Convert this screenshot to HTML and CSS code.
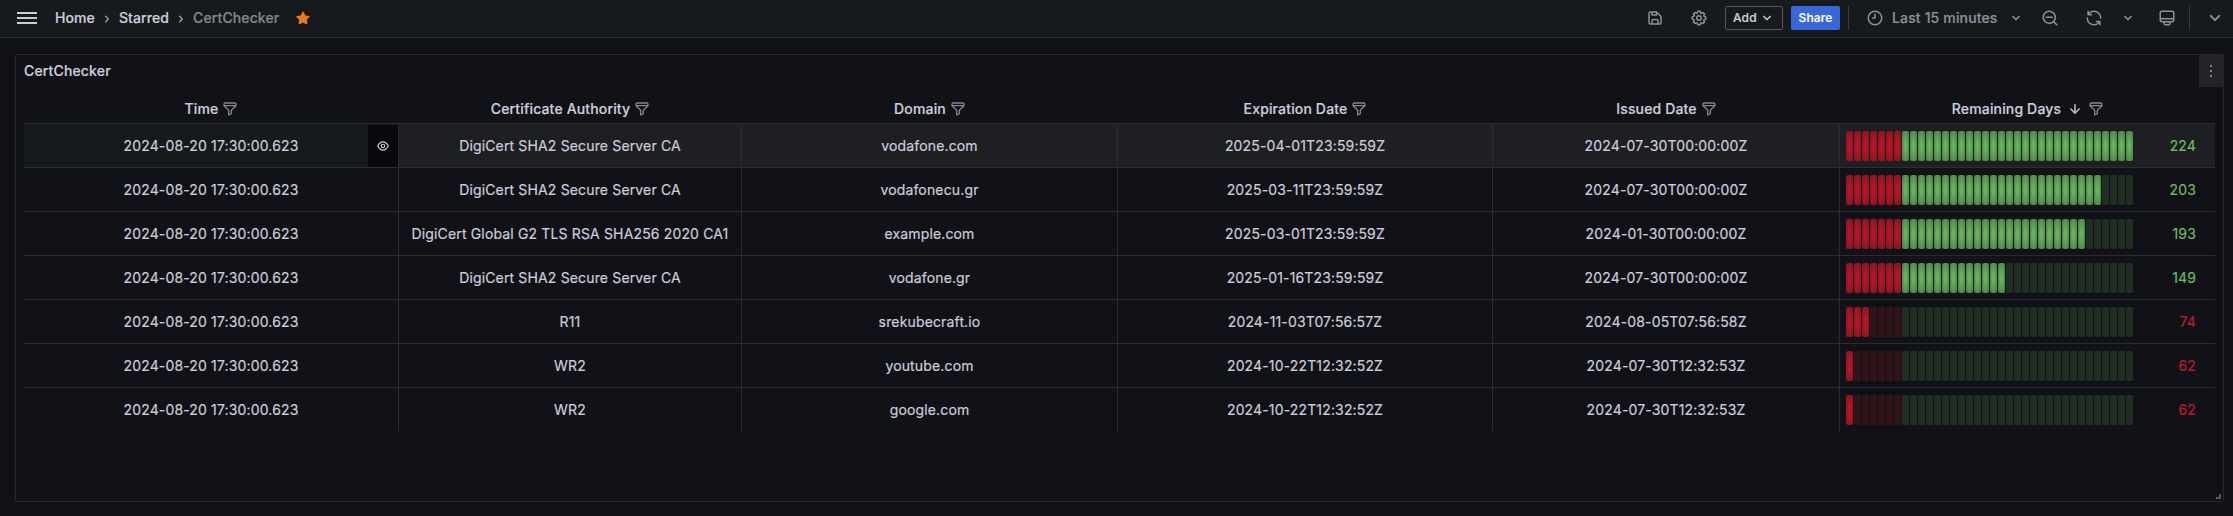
FILE: index.html
```html
<!DOCTYPE html>
<html lang="en">
<head>
<meta charset="utf-8">
<title>CertChecker</title>
<link rel="stylesheet" href="styles.css">
</head>
<body>
<svg class="defs" aria-hidden="true">
  <symbol id="filter" viewBox="0 0 24 24"><path d="M19,2H5A3,3,0,0,0,2,5V6.17a3,3,0,0,0,.25,1.2l0,.06a2.81,2.81,0,0,0,.59.86L9,14.41V21a1,1,0,0,0,.47.85A1,1,0,0,0,10,22a1,1,0,0,0,.45-.11l4-2A1,1,0,0,0,15,19V14.41l6.12-6.12a2.81,2.81,0,0,0,.59-.86l0-.06A3,3,0,0,0,22,6.17V5A3,3,0,0,0,19,2ZM13.29,13.29A1,1,0,0,0,13,14v4.38l-2,1V14a1,1,0,0,0-.29-.71L5.41,8H18.59ZM20,6H4V5A1,1,0,0,1,5,4H19a1,1,0,0,1,1,1Z"/></symbol>
  <symbol id="down" viewBox="0 0 24 24"><path d="M17,9.17a1,1,0,0,0-1.41,0L12,12.71,8.46,9.17a1,1,0,0,0-1.41,0,1,1,0,0,0,0,1.42l4.24,4.24a1,1,0,0,0,1.42,0L17,10.59A1,1,0,0,0,17,9.17Z"/></symbol>
  <symbol id="right" viewBox="0 0 24 24"><path d="M14.83,11.29,10.59,7.05a1,1,0,0,0-1.42,0,1,1,0,0,0,0,1.41L12.71,12,9.17,15.54a1,1,0,0,0,0,1.41,1,1,0,0,0,.71.29,1,1,0,0,0,.71-.29l4.24-4.24A1,1,0,0,0,14.83,11.29Z"/></symbol>
</svg>

<header class="topbar">
  <div class="topbar-left">
    <svg class="menu" viewBox="0 0 20 12"><path d="M0 1h20M0 6h20M0 11h20"/></svg>
    <nav class="crumbs">
      <span>Home</span>
      <svg class="icon sep"><use href="#right"/></svg>
      <span>Starred</span>
      <svg class="icon sep"><use href="#right"/></svg>
      <span class="current">CertChecker</span>
    </nav>
    <svg class="icon star" viewBox="0 0 24 24"><path d="M22 10.1c.1-.5-.3-1.1-.8-1.1l-5.700-.8L12.900 3c-.1-.2-.2-.3-.4-.4-.5-.3-1.100-.1-1.400.4L8.600 8.200 2.900 9c-.3 0-.5.1-.6.3-.4.4-.4 1 0 1.400l4.100 4-1 5.700c0 .2 0 .4.100.6.300.5.900.7 1.400.4l5.100-2.700 5.100 2.700c.1.100.3.100.5.100h.2c.5-.1.900-.6.800-1.200l-1-5.700 4.100-4c.2-.100.300-.300.300-.500z"/></svg>
  </div>
  <div class="topbar-right">
    <svg class="icon save" viewBox="0 0 24 24"><path d="m20.710 9.290-6-6a1 1 0 0 0-.32-.21A1.090 1.090 0 0 0 14 3H6a3 3 0 0 0-3 3v12a3 3 0 0 0 3 3h12a3 3 0 0 0 3-3v-8a1 1 0 0 0-.29-.71ZM9 5h4v2H9Zm6 14H9v-3a1 1 0 0 1 1-1h4a1 1 0 0 1 1 1Zm4-1a1 1 0 0 1-1 1h-1v-3a3 3 0 0 0-3-3h-4a3 3 0 0 0-3 3v3H6a1 1 0 0 1-1-1V6a1 1 0 0 1 1-1h1v3a1 1 0 0 0 1 1h6a1 1 0 0 0 1-1V6.410l4 4Z"/></svg>
    <svg class="icon cog" viewBox="0 0 24 24"><path d="M21.320 9.550l-1.890-.63.890-1.780A1 1 0 0 0 20.130 6L18 3.870a1 1 0 0 0-1.150-.19l-1.780.89-.63-1.890A1 1 0 0 0 13.500 2h-3a1 1 0 0 0-.95.680l-.63 1.890-1.780-.89A1 1 0 0 0 6 3.870L3.870 6a1 1 0 0 0-.19 1.150l.89 1.780-1.890.63a1 1 0 0 0-.68.940v3a1 1 0 0 0 .68.950l1.890.63-.89 1.780A1 1 0 0 0 3.870 18L6 20.130a1 1 0 0 0 1.150.19l1.780-.89.630 1.890a1 1 0 0 0 .95.680h3a1 1 0 0 0 .95-.68l.63-1.890 1.780.89a1 1 0 0 0 1.130-.19L20.130 18a1 1 0 0 0 .19-1.150l-.89-1.780 1.890-.63a1 1 0 0 0 .68-.94v-3a1 1 0 0 0-.68-.95ZM20 12.780l-1.200.4a2 2 0 0 0-1.280 2.770l.57 1.140-1.100 1.100-1.110-.6a2 2 0 0 0-2.710 1.230l-.4 1.200h-1.590l-.4-1.200A2 2 0 0 0 8 17.590l-1.140.57-1.100-1.070.6-1.140a2 2 0 0 0-1.230-2.770L4 12.780v-1.560l1.200-.4a2 2 0 0 0 1.280-2.770l-.57-1.110L7 5.870l1.110.57a2 2 0 0 0 2.710-1.230l.4-1.210h1.560l.4 1.200a2 2 0 0 0 2.770 1.280l1.140-.57 1.100 1.100-.6 1.110a2 2 0 0 0 1.230 2.710l1.200.4ZM12 8a4 4 0 1 0 4 4 4 4 0 0 0-4-4Zm0 6a2 2 0 1 1 2-2 2 2 0 0 1-2 2Z"/></svg>
    <div class="btn add">Add<svg class="icon"><use href="#down"/></svg></div>
    <div class="btn share">Share</div>
    <i class="divider d1"></i>
    <svg class="icon clock" viewBox="0 0 24 24"><path d="M12 2A10 10 0 1 0 22 12 10 10 0 0 0 12 2Zm0 18a8 8 0 1 1 8-8 8 8 0 0 1-8 8ZM12 6a1 1 0 0 0-1 1v4H9a1 1 0 0 0 0 2h3a1 1 0 0 0 1-1V7a1 1 0 0 0-1-1Z"/></svg>
    <span class="range">Last 15 minutes</span>
    <svg class="icon c1"><use href="#down"/></svg>
    <svg class="icon zoomout" viewBox="0 0 24 24"><path d="M21.710 20.290 18 16.610A9 9 0 1 0 16.610 18l3.680 3.680a1 1 0 0 0 1.420 0 1 1 0 0 0 0-1.390ZM11 18a7 7 0 1 1 7-7 7 7 0 0 1-7 7Zm4-8H7a1 1 0 0 0 0 2h8a1 1 0 0 0 0-2Z"/></svg>
    <svg class="icon sync" viewBox="0 0 24 24"><path d="M19.910 15.510h-4.530a1 1 0 0 0 0 2h2.400A8 8 0 0 1 4 12a1 1 0 0 0-2 0 10 10 0 0 0 16.880 7.230V21a1 1 0 0 0 2 0v-4.500a1 1 0 0 0-.97-.99ZM12 2a10 10 0 0 0-6.880 2.770V3a1 1 0 0 0-2 0v4.500a1 1 0 0 0 1 1h4.500a1 1 0 0 0 0-2h-2.400A8 8 0 0 1 20 12a1 1 0 0 0 2 0A10 10 0 0 0 12 2Z"/></svg>
    <svg class="icon c2"><use href="#down"/></svg>
    <svg class="icon monitor" viewBox="0 0 24 24"><path d="M19 2H5a3 3 0 0 0-3 3v10a3 3 0 0 0 3 3h2v1a3 3 0 0 0 3 3h4a3 3 0 0 0 3-3v-1h2a3 3 0 0 0 3-3V5a3 3 0 0 0-3-3Zm-4 17a1 1 0 0 1-1 1h-4a1 1 0 0 1-1-1v-1h6Zm5-4a1 1 0 0 1-1 1H5a1 1 0 0 1-1-1v-1h16Zm0-3H4V5a1 1 0 0 1 1-1h14a1 1 0 0 1 1 1Z"/></svg>
    <i class="divider d2"></i>
    <svg class="icon c3"><use href="#down"/></svg>
  </div>
</header>

<main class="panel">
  <div class="panel-head">
    <h2>CertChecker</h2>
    <div class="panel-menu"><i></i><i></i><i></i></div>
  </div>
  <div class="table" id="table">
    <div class="row head">
      <div>Time<svg class="icon"><use href="#filter"/></svg></div>
      <div>Certificate Authority<svg class="icon"><use href="#filter"/></svg></div>
      <div>Domain<svg class="icon"><use href="#filter"/></svg></div>
      <div>Expiration Date<svg class="icon"><use href="#filter"/></svg></div>
      <div>Issued Date<svg class="icon"><use href="#filter"/></svg></div>
      <div>Remaining Days<svg class="icon arrow" viewBox="0 0 24 24"><path d="M17.710 11.290a1 1 0 0 0-1.420 0L13 14.590V7a1 1 0 0 0-2 0v7.590l-3.290-3.300a1 1 0 0 0-1.420 1.420l5 5a1 1 0 0 0 .33.210.94.94 0 0 0 .76 0 1 1 0 0 0 .33-.21l5-5a1 1 0 0 0 0-1.420Z"/></svg><svg class="icon"><use href="#filter"/></svg></div>
    </div>
  </div>
  <svg class="resize" viewBox="0 0 5 5"><path d="M3 0h2v5H0V3h3z"/></svg>
</main>
<script src="table.js"></script>
</body>
</html>
```
FILE: styles.css
```css
* { box-sizing: border-box; }
body {
  margin: 0;
  height: 516px;
  overflow: hidden;
  background: #111217;
  color: #ccccdc;
  font: 400 14px/22px Inter, "Liberation Sans", sans-serif;
  letter-spacing: 0.15px;
  -webkit-text-stroke: 0.2px currentColor;
  display: flex;
  flex-direction: column;
}
.defs { display: none; }
.icon { width: 16px; height: 16px; fill: currentColor; flex: none; display: block; }

.topbar {
  height: 38px;
  flex: none;
  display: flex;
  justify-content: space-between;
  padding-bottom: 1px;
  background: #171a1d;
  border-bottom: 1px solid #2a2c30;
}
.topbar-left, .topbar-right, .crumbs { display: flex; align-items: center; }
.topbar-left { padding-left: 17px; font-weight: 500; }
.menu { width: 20px; height: 12px; stroke: #ccccdc; stroke-width: 2; margin-right: 18px; }
.crumbs { letter-spacing: 0.1px; }
.crumbs .sep { margin: 1px 4px 0; color: #9a9ba8; }
.crumbs .current { color: #84858f; }
.star { color: #f3761a; margin-left: 16px; }
.topbar-right { color: #8e8f9a; font-weight: 500; }
.topbar-right .icon { width: 18px; height: 18px; }
.btn { height: 24px; border-radius: 2px; display: flex; align-items: center; font-size: 12px; }
.save { margin-right: 26px; }
.cog { margin-right: 17px; }
.add { width: 58px; border: 1px solid #55565d; color: #ccccdc; padding-left: 7px; gap: 1px; margin-right: 8px; }
.share { width: 49px; background: #3868d8; color: #fff; justify-content: center; }
.divider { width: 1px; height: 24px; background: #36383d; }
.d1 { margin: 0 17px 0 8px; }
.range { width: 105px; white-space: nowrap; }
.clock { margin-right: 8px; }
.c1 { margin: 0 16px 0 10px; }
.zoomout { margin-right: 26px; }
.sync { margin-right: 16px; }
.c2 { margin-right: 21px; }
.d2 { margin: 0 13px; }
.topbar-right .c3 { width: 24px; height: 24px; margin-right: 6px; }

.panel {
  position: relative;
  flex: none;
  width: 2209px;
  height: 448px;
  margin: 16px 0 0 15px;
  border: 1px solid #26282c;
  border-radius: 2px;
}
.panel-head { height: 32px; display: flex; justify-content: space-between; }
.panel-head h2 { margin: 0; padding-left: 8px; font-size: 14px; line-height: 32px; font-weight: 500; }
.panel-menu {
  width: 24px;
  height: 32px;
  background: #222428;
  display: flex;
  flex-direction: column;
  align-items: center;
  justify-content: center;
  gap: 3px;
}
.panel-menu i { width: 2px; height: 2px; border-radius: 1px; background: #a5a6b2; }

.table { margin: 0 8px; width: 2191px; }
.row { display: grid; grid-template-columns: 375px 343px 376px 375px 347px 375px; height: 44px; }
.row > div {
  display: flex;
  align-items: center;
  justify-content: center;
  padding-top: 1px;
  border-right: 1px solid #2a2c30;
  border-bottom: 1px solid #2a2c30;
}
.row > div:last-child { border-right: 0; }
.row:last-child > div { border-bottom-color: transparent; }
.row.head { height: 37px; font-weight: 500; }
.row.head > div { border-right-color: transparent; padding: 7px 0 0 1px; }
.head .icon { color: #84858f; margin-left: 4px; }
.head .arrow { width: 20px; height: 20px; color: #b4b4c3; margin: 0 -1px 0 4px; }
.row.hover > div { background: #1e1f23; }
.row.hover > div:first-child { background: #171a1d; position: relative; }
.inspect {
  position: absolute;
  right: 0;
  top: 1px;
  bottom: 0;
  width: 30px;
  background: #08090b;
  display: flex;
  align-items: center;
  justify-content: center;
}
.inspect .icon { width: 14px; height: 14px; }
.row > .gauge { justify-content: space-between; padding: 1px 19px 0 6px; }
.cells { display: flex; gap: 1px; }
.cells i { width: 7px; height: 30px; border-radius: 2px; }
.red { background: #31131a; }
.green { background: #222e24; }
.red.lit { background: radial-gradient(#be1427 10%, #7d1520); }
.green.lit { background: radial-gradient(#69b75f 10%, #47793f); }
.good { color: #6cb963; }
.bad { color: #bd1a2b; }
.resize { position: absolute; right: 2px; bottom: 2px; width: 5px; height: 5px; fill: #55565c; }
```
FILE: table.js
```js
const rows = [
  ["DigiCert SHA2 Secure Server CA", "vodafone.com", "2025-04-01T23:59:59Z", "2024-07-30T00:00:00Z", 224, 36],
  ["DigiCert SHA2 Secure Server CA", "vodafonecu.gr", "2025-03-11T23:59:59Z", "2024-07-30T00:00:00Z", 203, 32],
  ["DigiCert Global G2 TLS RSA SHA256 2020 CA1", "example.com", "2025-03-01T23:59:59Z", "2024-01-30T00:00:00Z", 193, 30],
  ["DigiCert SHA2 Secure Server CA", "vodafone.gr", "2025-01-16T23:59:59Z", "2024-07-30T00:00:00Z", 149, 20],
  ["R11", "srekubecraft.io", "2024-11-03T07:56:57Z", "2024-08-05T07:56:58Z", 74, 3],
  ["WR2", "youtube.com", "2024-10-22T12:32:52Z", "2024-07-30T12:32:53Z", 62, 1],
  ["WR2", "google.com", "2024-10-22T12:32:52Z", "2024-07-30T12:32:53Z", 62, 1]
];
const CELLS = 36, RED_CELLS = 7;
const eye = '<span class="inspect"><svg class="icon" viewBox="0 0 24 24"><path d="M21.920 11.600C19.900 6.910 16.100 4 12 4S4.100 6.910 2.080 11.600a1 1 0 0 0 0 .8C4.100 17.090 7.900 20 12 20s7.900-2.910 9.920-7.600a1 1 0 0 0 0-.8ZM12 18c-3.170 0-6.170-2.290-7.900-6C5.830 8.290 8.830 6 12 6s6.170 2.290 7.900 6c-1.730 3.710-4.730 6-7.900 6Zm0-10a4 4 0 1 0 4 4 4 4 0 0 0-4-4Zm0 6a2 2 0 1 1 2-2 2 2 0 0 1-2 2Z"/></svg></span>';

const table = document.getElementById("table");
rows.forEach(([ca, domain, expires, issued, days, lit], index) => {
  let cells = "";
  for (let i = 0; i < CELLS; i++) {
    cells += `<i class="${i < RED_CELLS ? "red" : "green"}${i < lit ? " lit" : ""}"></i>`;
  }
  const row = document.createElement("div");
  row.className = index === 0 ? "row hover" : "row";
  row.innerHTML = `<div>2024-08-20 17:30:00.623${index === 0 ? eye : ""}</div>`
    + `<div>${ca}</div><div>${domain}</div><div>${expires}</div><div>${issued}</div>`
    + `<div class="gauge"><span class="cells">${cells}</span><span class="${days > 100 ? "good" : "bad"}">${days}</span></div>`;
  table.appendChild(row);
});
```
